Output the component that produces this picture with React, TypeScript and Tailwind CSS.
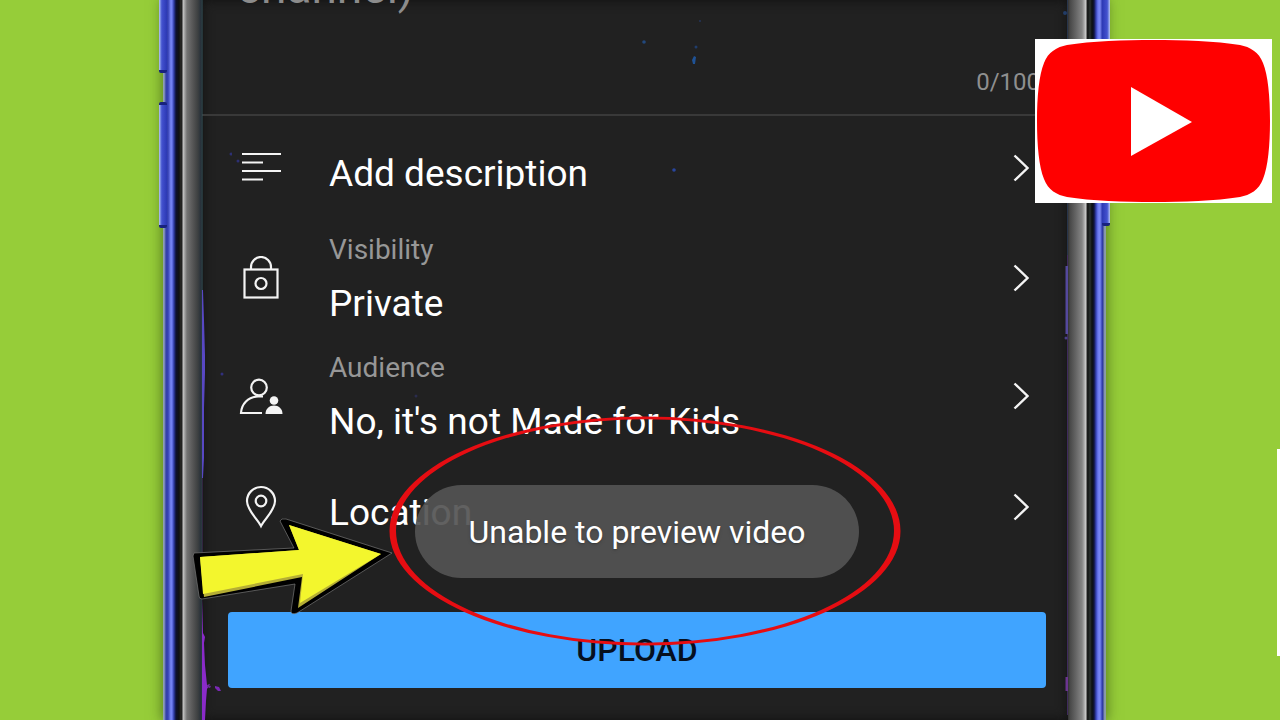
import React from "react";

type Row = {
  label?: string;
  value: string;
  icon: React.ReactNode;
};

const rows: Row[] = [
  {
    value: "Add description",
    icon: <path d="M3 8h39M3 16.5h21M3 25h39M3 33.5h21" />,
  },
  {
    label: "Visibility",
    value: "Private",
    icon: (
      <>
        <rect x="5.5" y="13.5" width="33" height="28" />
        <path d="M12 13v-2a10 10 0 0 1 20 0v2" />
        <circle cx="22" cy="27.5" r="5.5" />
      </>
    ),
  },
  {
    label: "Audience",
    value: "No, it's not Made for Kids",
    icon: (
      <>
        <circle cx="20" cy="13.5" r="7.8" />
        <path d="M23 39H2C2.5 30 9 23 19 22.5H24" />
        <circle cx="35" cy="26.5" r="4.3" fill="currentColor" stroke="none" />
        <path
          d="M26.5 40c0-5.5 4-8.5 8.5-8.5s8.5 3 8.5 8.5z"
          fill="currentColor"
          stroke="none"
        />
      </>
    ),
  },
  {
    value: "Location",
    icon: (
      <>
        <path d="M22 41C18.5 34 8 25.5 8 16a14 14 0 0 1 28 0C36 25.5 25.5 34 22 41z" />
        <circle cx="22" cy="16" r="5.3" />
      </>
    ),
  },
];

function SettingRow({ label, value, icon }: Row) {
  return (
    <button
      type="button"
      className={`flex w-full items-center pr-[39px] pl-[37px] text-left ${
        label ? "h-[118px]" : "h-[103px]"
      }`}
    >
      <svg
        viewBox="0 0 44 44"
        className="size-11 shrink-0 text-[#f4f4f4]"
        fill="none"
        stroke="currentColor"
        strokeWidth="2.2"
        aria-hidden="true"
      >
        {icon}
      </svg>
      <span className={`ml-[46px] flex flex-1 flex-col ${label ? "pt-2" : "pt-3"}`}>
        {label && (
          <span className="text-[28px] leading-[44px] text-[#979797]">{label}</span>
        )}
        {/* single-line rows cut the descenders off */}
        <span
          className={`text-[37px] leading-[64px] text-white ${
            label ? "" : "mb-[17px] h-[47px] overflow-hidden"
          }`}
        >
          {value}
        </span>
      </span>
      <svg
        viewBox="0 0 16 28"
        className="h-7 w-4 shrink-0 text-[#f4f4f4]"
        fill="none"
        stroke="currentColor"
        strokeWidth="2.4"
        aria-hidden="true"
      >
        <path d="M1.5 1.5L14.5 14L1.5 26.5" />
      </svg>
    </button>
  );
}

function Toast({ children }: { children: React.ReactNode }) {
  return (
    <div className="pointer-events-none absolute inset-x-0 top-[485px] flex justify-center pr-[22px] pl-[26px]">
      <div
        role="status"
        className="flex h-[93px] items-center rounded-full bg-[#545454]/92 px-[54px] text-[32px] text-white text-shadow-md"
      >
        {children}
      </div>
    </div>
  );
}

function SideKey({ className }: { className: string }) {
  return (
    <div
      className={`absolute w-2 rounded-xs border-y-3 border-[#18227e] bg-linear-to-r from-[#bcc5ee] via-[#4452cf] via-35% to-[#2b38b4] ${className}`}
    />
  );
}

function Specks() {
  return (
    <>
      <svg viewBox="0 0 30 720" className="absolute top-0 left-0 h-[720px] w-[30px]" aria-hidden="true">
        <path d="M0 0v290" stroke="#35555c" />
        <path d="M0 290h1l1 30 1 35v18l-1 35v50l-1 20H0z" fill="#5848c4" />
        <path d="M0 478v120" stroke="#4b3266" />
        <path d="M0 598l1 35 2 4-1 6 1 22 2 20 3-1-3 5-1 12-1 19H0z" fill="#8a2bc9" />
        <path d="M5 685l4 1-1 2-3-1z" fill="#6a2a98" />
        <path d="M13 686l4 1 2 4-3 0-3-3z" fill="#7a28b4" />
        <circle cx="20" cy="374" r="1.5" fill="#31307d" />
        <circle cx="29" cy="154" r="1.5" fill="#2d3074" />
      </svg>
      <svg viewBox="0 0 10 720" className="absolute top-0 right-0 h-[720px] w-[10px]" aria-hidden="true">
        <path d="M9.5 0v255" stroke="#27344a" />
        <path d="M9 255h1v460H9z" fill="#3f2a5c" />
        <path d="M7.5 266h2.5v68H7.5z" fill="#54489c" />
        <path d="M7.5 677h2.5v14H7.5z" fill="#6b348f" />
        <circle cx="7" cy="13" r="2" fill="#223c66" />
        <circle cx="8" cy="338" r="1.5" fill="#4a3f88" />
      </svg>
      <svg viewBox="0 0 470 400" className="absolute top-0 left-[30px] h-[400px] w-[470px]" aria-hidden="true">
        <path d="M462 56l2 1-1 7-2 0-1-4z" fill="#1f5295" />
        <circle cx="464" cy="47" r="1.5" fill="#203d6c" />
        <circle cx="468" cy="21" r="1" fill="#24355a" />
        <circle cx="412" cy="42" r="1.8" fill="#22487c" />
        <circle cx="442" cy="170" r="1.8" fill="#28459c" />
        <circle cx="6" cy="161" r="1.5" fill="#2d3074" />
        <circle cx="184" cy="396" r="1.5" fill="#2a2c4d" />
      </svg>
    </>
  );
}

function Screen() {
  return (
    <main className="relative min-w-0 flex-1 bg-[#212121] shadow-[inset_0_0_12px_#111]">
      <div className="flex h-[116px] flex-col justify-between border-b-2 border-[#393939]">
        <textarea
          rows={1}
          aria-label="Title"
          placeholder="channel)"
          className="-mt-10 h-[60px] w-full resize-none overflow-hidden bg-transparent pl-[35px] text-[46px] leading-[54px] text-[#8c8c8c] outline-none placeholder:text-[#8c8c8c]"
        />
        <p className="pr-7 pb-4 text-right text-2xl leading-8 text-[#8f8f8f]">0/100</p>
      </div>
      {rows.map((row) => (
        <SettingRow key={row.value} {...row} />
      ))}
      <div className="pt-[54px] pr-[22px] pl-[26px]">
        <button
          type="button"
          className="h-[76px] w-full rounded bg-[#40a4ff] text-[32px] font-medium text-[#06101f]"
        >
          UPLOAD
        </button>
      </div>
      <Specks />
      <Toast>Unable to preview video</Toast>
    </main>
  );
}

function Annotations() {
  return (
    <>
      <svg
        viewBox="0 0 512 230"
        className="pointer-events-none absolute top-[416px] left-[389px] h-[230px] w-[512px]"
        aria-hidden="true"
      >
        <path
          fillRule="evenodd"
          fill="#e60d12"
          d="M0.5 115a255.5 114.5 0 1 0 511 0a255.5 114.5 0 1 0-511 0zM7 115a249 111.7 0 1 0 498 0a249 111.7 0 1 0-498 0z"
        />
      </svg>
      <svg
        viewBox="0 0 204 100"
        className="pointer-events-none absolute top-[516px] left-[190px] h-[100px] w-[204px]"
        aria-hidden="true"
      >
        <path
          d="M4 37L104 32L90 5Q91 2 96 3L202 37L107 97Q101 99 101 95L105 68L12 83Q9 83 9 80L3 40z"
          fill="#000"
          stroke="#777"
          strokeWidth="0.7"
        />
        <path d="M10 41L109 34L99 9L191 38L108 92L112 61L14 81z" fill="#b5ae35" />
        <path d="M10 41L109 34L99 9L191 38L110 87L113 58L13 78z" fill="#f3f62d" />
      </svg>
    </>
  );
}

function PlayLogo() {
  return (
    <svg
      viewBox="0 0 237 164"
      className="absolute top-[39px] right-2 h-[164px] w-[237px] bg-white"
      role="img"
      aria-label="YouTube"
    >
      <path
        d="M2 82C2 58 4 36 9 24C13 13 22 8 32 6C56 2 90 1 118.5 1S181 2 205 6C215 8 224 13 228 24C233 36 235 58 235 82S233 128 228 140C224 151 215 156 205 158C181 162 147 163 118.5 163S56 162 32 158C22 156 13 151 9 140C4 128 2 106 2 82z"
        fill="#f00"
      />
      <path d="M96 48L157 83L96 117z" fill="#fff" />
    </svg>
  );
}

export default function App() {
  return (
    <div className="relative h-screen overflow-hidden bg-[#96cd39] pr-[174px] pl-[163px] font-[Roboto,sans-serif]">
      <div className="relative flex h-full shadow-[0_0_12px_1px_#2f4510a0]">
        <div className="w-[39px] shrink-0 bg-[linear-gradient(90deg,#8f9fa0_0px,#8f9fc0_1px,#3541a5_3px,#3541b5_5px,#7a88f5_8px,#6c7af0_9px,#2c38a0_11px,#0d1030_13px,#101010_16px,#2b2b28_18px,#1a1a1a_19px,#c8c8c8_20px,#9a9a9a_22px,#737373_24px,#555_30px,#3c3f40_35px,#26303a_38px,#2c4145_39px)]" />
        <Screen />
        <div className="w-[38px] shrink-0 bg-[linear-gradient(270deg,#8fa0a0_0px,#8290b0_2px,#2a3691_3px,#3541b5_4px,#7a88f5_6px,#6c7af0_8px,#3541b5_10px,#10143a_12px,#0c1010_14px,#2c3230_16px,#141616_18px,#20201f_19px,#cfcfcf_20px,#a5a5a5_22px,#858585_24px,#666_30px,#484848_36px,#333_38px)]" />
        <SideKey className="-top-2 -left-1 h-[81px]" />
        <SideKey className="top-[102px] -left-1 h-[126px]" />
        <SideKey className="-top-2 -right-1 h-[234px] rotate-180" />
      </div>
      <Annotations />
      <PlayLogo />
      <div className="absolute top-[449px] right-0 h-[207px] w-[3px] bg-white" />
    </div>
  );
}
